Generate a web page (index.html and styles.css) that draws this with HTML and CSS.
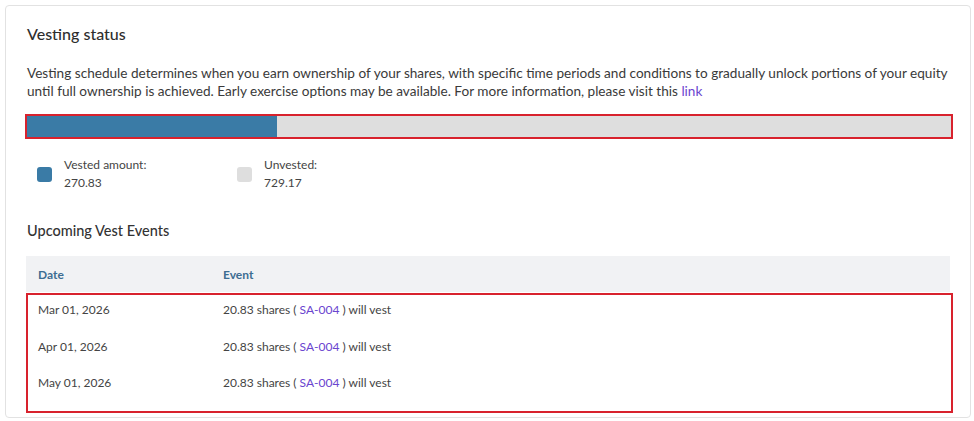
FILE: index.html
```html
<!DOCTYPE html>
<html>
<head>
<meta charset="utf-8">
<link rel="stylesheet" href="styles.css">
</head>
<body>
<div class="card">
  <h2 class="title">Vesting status</h2>
  <p class="desc">Vesting schedule determines when you earn ownership of your shares, with specific time periods and conditions to gradually unlock portions of your equity until full ownership is achieved. Early exercise options may be available. For more information, please visit this <a class="lnk" href="#">link</a></p>
  <div class="bar"><div class="fill" style="width:27.08%"></div></div>
  <div class="legend">
    <div class="item">
      <span class="sw sw-vested"></span>
      <div class="lt"><div>Vested amount:</div><div>270.83</div></div>
    </div>
    <div class="item">
      <span class="sw sw-unvested"></span>
      <div class="lt"><div>Unvested:</div><div>729.17</div></div>
    </div>
  </div>
  <h3 class="sub">Upcoming Vest Events</h3>
  <div class="table">
    <div class="thead">
      <div class="c1">Date</div>
      <div class="c2">Event</div>
    </div>
    <div class="tbody">
      <div class="row"><div class="c1">Mar 01, 2026</div><div class="c2">20.83 shares ( <a class="lnk" href="#">SA-004</a> ) will vest</div></div>
      <div class="row"><div class="c1">Apr 01, 2026</div><div class="c2">20.83 shares ( <a class="lnk" href="#">SA-004</a> ) will vest</div></div>
      <div class="row"><div class="c1">May 01, 2026</div><div class="c2">20.83 shares ( <a class="lnk" href="#">SA-004</a> ) will vest</div></div>
    </div>
  </div>
</div>
</body>
</html>
```

FILE: styles.css
```css
* { box-sizing: border-box; }
html, body { margin: 0; padding: 0; background: #fff; }
body {
  padding: 5px 3px 0 5px;
  font-family: "Lato", "Noto Sans", sans-serif;
  color: #333;
}
.card {
  border: 1px solid #e2e2e2;
  border-radius: 4px;
  height: 413px;
  padding: 18px 20px 0 20px;
}
.title {
  margin: 0 0 0 1px;
  font-size: 16px;
  font-weight: 500;
  line-height: 20px;
  color: #2e2e2e;
}
.desc {
  margin: 20px 0 0 1px;
  font-size: 13.6px;
  line-height: 18px;
  color: #3a3a3a;
}
.lnk { color: #6a45cf; text-decoration: none; }
.bar {
  margin: 14px 0 0 -1px;
  width: 928px;
  height: 25px;
  border: 2px solid #d8222d;
  background: #dedede;
}
.fill { height: 100%; background: #3a7ba6; }
.legend {
  display: flex;
  margin: 17px 0 0 11px;
}
.item { display: flex; align-items: center; width: 200px; }
.sw {
  width: 15px; height: 15px;
  border-radius: 3px;
  margin-right: 12px;
  flex: none;
}
.sw-vested { background: #3a7ba6; }
.sw-unvested { background: #dedede; }
.lt { font-size: 12px; line-height: 18px; color: #444; }
.sub {
  margin: 29px 0 0 1px;
  font-size: 14.5px;
  font-weight: 500;
  line-height: 20px;
  color: #333;
}
.table { margin-top: 15px; width: 927px; }
.thead {
  display: flex;
  width: 924px;
  height: 36px;
  align-items: center;
  background: #f1f2f4;
  font-size: 12px;
  font-weight: 700;
  color: #3d6d92;
}
.c1 { width: 197px; padding-left: 12px; flex: none; }
.c2 { flex: 1; }
.tbody {
  margin-top: 1px;
  border: 2px solid #d8222d;
  height: 120px;
}
.row {
  display: flex;
  height: 36.5px;
  padding-top: 7px;
  line-height: 16px;
  font-size: 12px;
  color: #444;
}
.row .c1 { padding-left: 10px; width: 195px; }
```
